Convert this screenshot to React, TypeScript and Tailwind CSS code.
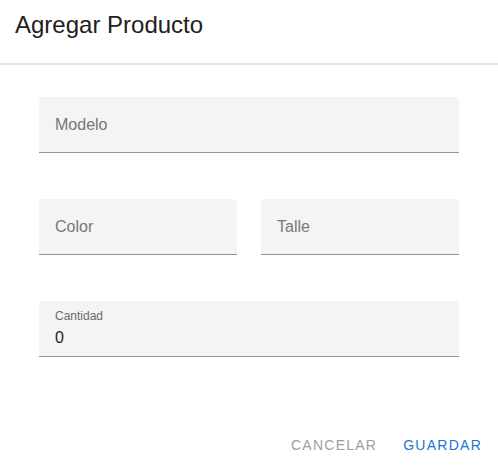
export default function App() {
  return (
    <div
      className="w-[498px] h-[465px] overflow-hidden bg-white flex flex-col"
      style={{ fontFamily: '"Liberation Sans", Arial, sans-serif' }}
    >
      <div className="h-[63px] shrink-0 pl-[15px] pt-[9px]">
        <h2 className="text-[24px] leading-[32px] font-normal text-[#212121]">Agregar Producto</h2>
      </div>
      <div className="h-[2px] shrink-0 bg-[#e3e3e3]" />
      <div className="px-[39px] pt-[32px] pb-[62px] flex flex-col gap-[46px] shrink-0">
        <div className="h-[56px] bg-[#f4f4f4] rounded-t-[4px] border-b border-[#949494] flex items-center pl-[16px]">
          <span className="text-[16px] leading-[24px] text-[#777777]">Modelo</span>
        </div>
        <div className="flex gap-[24px]">
          <div className="flex-1 h-[56px] bg-[#f4f4f4] rounded-t-[4px] border-b border-[#949494] flex items-center pl-[16px]">
            <span className="text-[16px] leading-[24px] text-[#777777]">Color</span>
          </div>
          <div className="flex-1 h-[56px] bg-[#f4f4f4] rounded-t-[4px] border-b border-[#949494] flex items-center pl-[16px]">
            <span className="text-[16px] leading-[24px] text-[#777777]">Talle</span>
          </div>
        </div>
        <div className="h-[56px] bg-[#f4f4f4] rounded-t-[4px] border-b border-[#949494] flex flex-col pl-[16px] pt-[9px]">
          <span className="text-[12px] leading-[12px] text-[#6b6b6b]">Cantidad</span>
          <span className="mt-[6px] text-[16px] leading-[19px] text-[#212121]">0</span>
        </div>
      </div>
      <div className="flex justify-end items-center gap-[10px] p-[8px] shrink-0">
        <button className="h-[36px] px-[8px] text-[14px] leading-[36px] tracking-[1.25px] uppercase text-[#9e9e9e]">
          Cancelar
        </button>
        <button className="h-[36px] px-[8px] text-[14px] leading-[36px] tracking-[1.25px] uppercase text-[#1976d2]">
          Guardar
        </button>
      </div>
    </div>
  );
}
